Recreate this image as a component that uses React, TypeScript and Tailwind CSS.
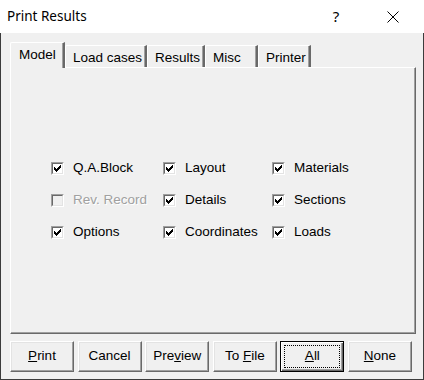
import React from 'react';

const UI = "font-['Liberation_Sans',Arial,sans-serif] text-[13.5px] text-black";

// classic 7x7 check glyph, one rect per run of pixels
const CHECK: [number, number, number][] = [
  [6, 0, 1],
  [5, 1, 2],
  [0, 2, 1], [4, 2, 3],
  [0, 3, 2], [3, 3, 3],
  [0, 4, 5],
  [1, 5, 3],
  [2, 6, 1],
];

const CheckBox = ({ label, checked = true, disabled = false }: { label: string; checked?: boolean; disabled?: boolean }) => (
  <div className="flex items-center h-[32px]">
    <div className="w-[13px] h-[13px] flex border border-t-[#a0a0a0] border-l-[#a0a0a0] border-r-white border-b-white">
      <div className={`flex-1 border border-t-[#696969] border-l-[#696969] border-r-[#e3e3e3] border-b-[#e3e3e3] ${disabled ? 'bg-[#f0f0f0]' : 'bg-white'}`}>
        {checked && (
          <svg width="7" height="7" viewBox="0 0 7 7" className="m-[1px]" shapeRendering="crispEdges">
            {CHECK.map(([x, y, w], i) => (
              <rect key={i} x={x} y={y} width={w} height={1} fill="#000" />
            ))}
          </svg>
        )}
      </div>
    </div>
    <span className={`ml-[9px] ${disabled ? 'text-[#a0a0a0] [text-shadow:1px_1px_0_#fff]' : ''}`}>{label}</span>
  </div>
);

const Btn = ({ children, focused = false }: { children: React.ReactNode; focused?: boolean }) =>
  focused ? (
    <button className="relative w-[64px] h-[31px] bg-[#f0f0f0] border border-black shadow-[inset_1px_1px_0_#fff,inset_-1px_-1px_0_#696969,inset_-2px_-2px_0_#a0a0a0]">
      {children}
      <span className="absolute inset-[3px] border border-dotted border-black"></span>
    </button>
  ) : (
    <button className="w-[64px] h-[31px] bg-[#f0f0f0] border border-t-white border-l-white border-r-[#696969] border-b-[#696969] shadow-[inset_-1px_-1px_0_#a0a0a0,inset_1px_1px_0_#e3e3e3]">
      {children}
    </button>
  );

const tabs = [
  { label: 'Model', w: 'w-[55px]' },
  { label: 'Load cases', w: 'w-[82px]' },
  { label: 'Results', w: 'w-[58px]' },
  { label: 'Misc', w: 'w-[53px]' },
  { label: 'Printer', w: 'w-[53px]' },
];

export default function App() {
  return (
    <div className={`w-[424px] h-[380px] flex flex-col bg-white ${UI}`}>
      {/* Title bar */}
      <div className="h-[33px] flex items-center bg-white shrink-0">
        <span className="pl-[7px] flex-1 font-['Noto_Sans',sans-serif] text-[13.5px] text-black">Print Results</span>
        <span className="w-[20px] text-center font-['Noto_Sans',sans-serif] text-[15px] mr-[41px]">?</span>
        <svg width="12" height="12" viewBox="0 0 12 12" className="mr-[25px]">
          <path d="M0.5 0.5L11.5 11.5M11.5 0.5L0.5 11.5" stroke="#000" strokeWidth="1" />
        </svg>
      </div>

      {/* Dialog body */}
      <div className="flex-1 flex flex-col bg-[#f0f0f0] border-l border-r border-b border-[#3c3c3c]">
        {/* Tabs */}
        <div className="flex items-end h-[25px] mt-[9px] pl-[9px]">
          {tabs.map((t, i) =>
            i === 0 ? (
              <div
                key={t.label}
                className={`${t.w} h-[26px] -mb-[1px] relative z-10 bg-[#f0f0f0] pl-[8px] pt-[2px] rounded-tl-[2px] border-t border-l border-t-white border-l-white border-r-2 border-r-[#696969] shadow-[inset_-1px_0_0_#a0a0a0]`}
              >
                {t.label}
              </div>
            ) : (
              <div
                key={t.label}
                className={`${t.w} h-[22px] pl-[7px] pt-[2px] rounded-tl-[2px] border-t border-l border-t-white border-l-white border-r-2 border-r-[#696969] shadow-[inset_-1px_0_0_#a0a0a0] bg-[#f0f0f0]`}
              >
                {t.label}
              </div>
            )
          )}
        </div>

        {/* Tab page */}
        <div className="h-[267px] ml-[9px] mr-[7px] border border-t-white border-l-white border-r-[#696969] border-b-[#696969] shadow-[inset_-1px_-1px_0_#a0a0a0]">
          <div className="grid grid-cols-[112px_109px_1fr] mt-[84px] ml-[40px]">
            <CheckBox label="Q.A.Block" />
            <CheckBox label="Layout" />
            <CheckBox label="Materials" />
            <CheckBox label="Rev. Record" checked={false} disabled />
            <CheckBox label="Details" />
            <CheckBox label="Sections" />
            <CheckBox label="Options" />
            <CheckBox label="Coordinates" />
            <CheckBox label="Loads" />
          </div>
        </div>

        {/* Buttons */}
        <div className="flex justify-between mt-[7px] ml-[9px] w-[402px]">
          <Btn><u>P</u>rint</Btn>
          <Btn>Cancel</Btn>
          <Btn>Pre<u>v</u>iew</Btn>
          <Btn>To <u>F</u>ile</Btn>
          <Btn focused><u>A</u>ll</Btn>
          <Btn><u>N</u>one</Btn>
        </div>
      </div>
    </div>
  );
}
